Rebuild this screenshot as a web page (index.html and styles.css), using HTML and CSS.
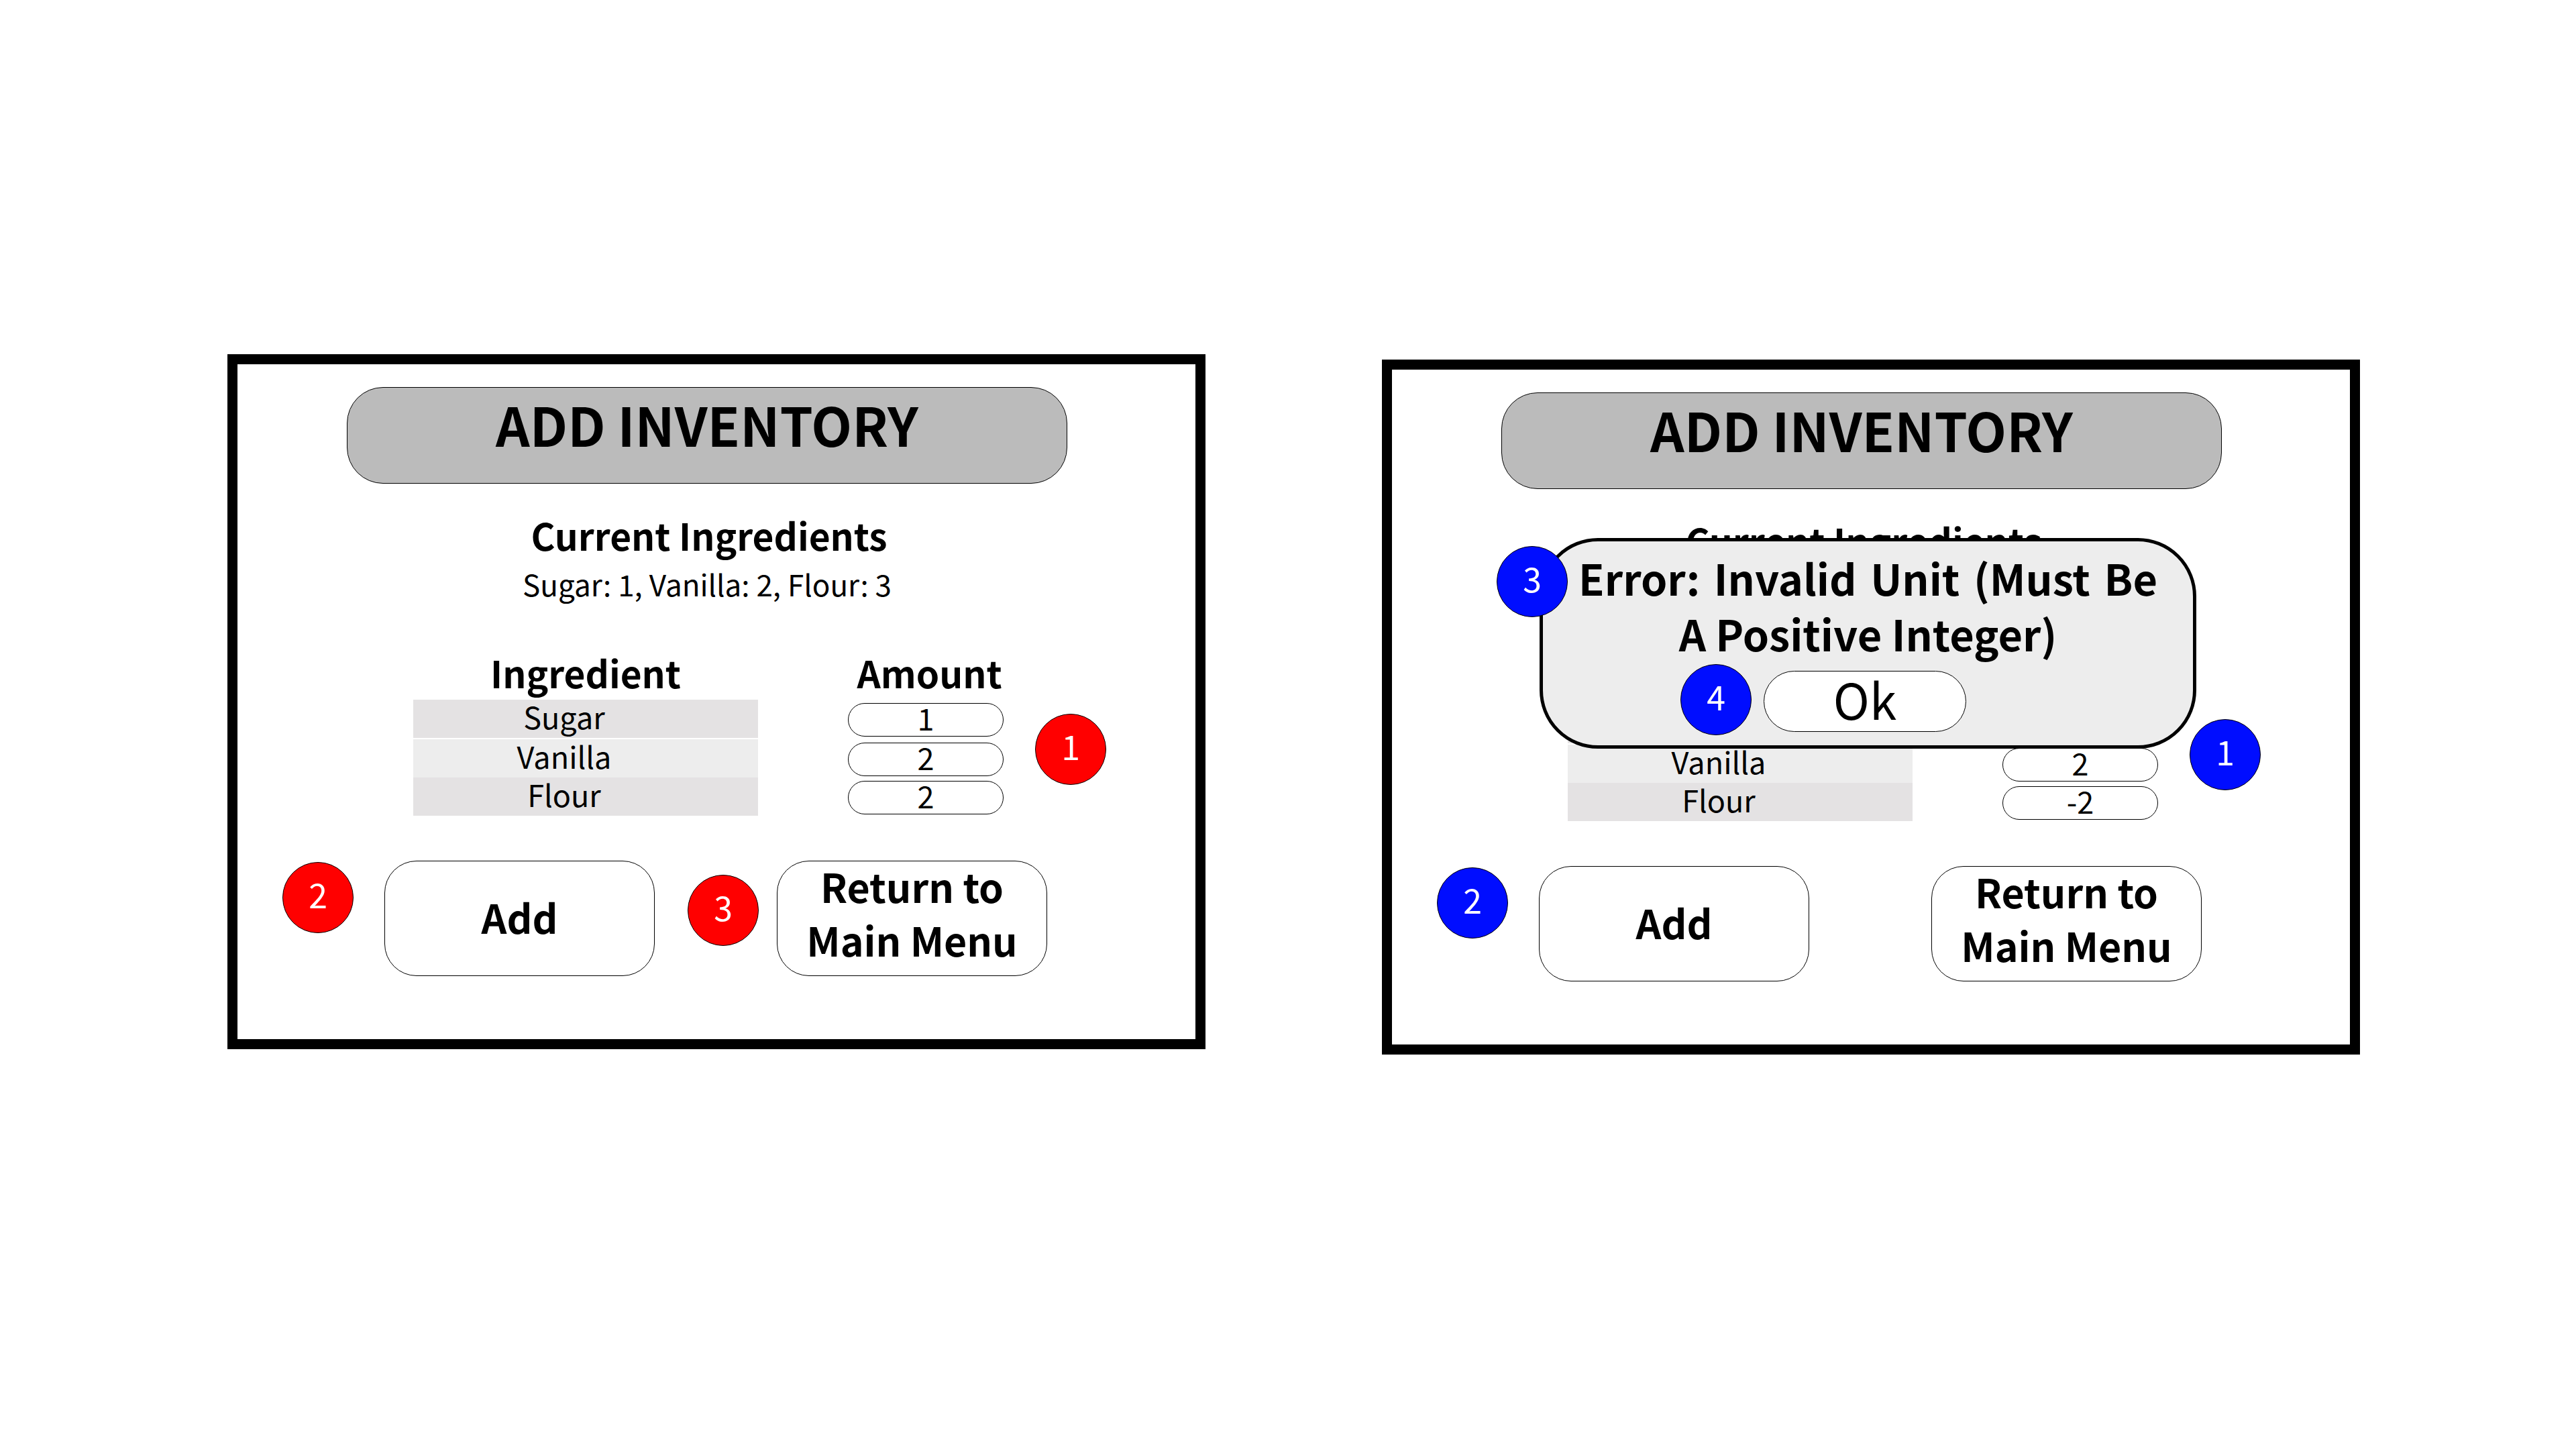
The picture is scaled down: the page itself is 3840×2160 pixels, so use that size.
FILE: index.html
```html
<!DOCTYPE html>
<html lang="en">
<head>
<meta charset="utf-8">
<title>Add Inventory</title>
<link rel="stylesheet" href="styles.css">
</head>
<body>
<main class="board">
  <section class="screen">
    <h1 class="title">ADD INVENTORY</h1>
    <h2 class="heading">Current Ingredients</h2>
    <p class="summary">Sugar: 1, Vanilla: 2, Flour: 3</p>
    <form class="form">
      <div class="stock">
        <table class="table">
          <thead>
            <tr><th class="name-col" scope="col">Ingredient</th><th class="amount-col" scope="col">Amount</th></tr>
          </thead>
          <tbody>
            <tr class="first-row"><td class="name"><label for="a-sugar">Sugar</label></td><td class="amount"><input class="field" id="a-sugar" type="text" inputmode="numeric" value="1"></td></tr>
            <tr><td class="name name-light"><label for="a-vanilla">Vanilla</label></td><td class="amount"><input class="field" id="a-vanilla" type="text" inputmode="numeric" value="2"></td></tr>
            <tr><td class="name"><label for="a-flour">Flour</label></td><td class="amount"><input class="field" id="a-flour" type="text" inputmode="numeric" value="2"></td></tr>
          </tbody>
        </table>
      </div>
      <div class="actions">
        <button class="action" type="button">Add</button>
        <button class="action action-tall" type="button">Return to<br>Main Menu</button>
      </div>
    </form>
    <span class="badge badge-amount">1</span>
    <span class="badge badge-add">2</span>
    <span class="badge badge-return">3</span>
  </section>

  <section class="screen screen-error">
    <h1 class="title">ADD INVENTORY</h1>
    <h2 class="heading">Current Ingredients</h2>
    <p class="summary">Sugar: 1, Vanilla: 2, Flour: 3</p>
    <form class="form">
      <div class="stock">
        <table class="table">
          <thead>
            <tr><th class="name-col" scope="col">Ingredient</th><th class="amount-col" scope="col">Amount</th></tr>
          </thead>
          <tbody>
            <tr class="first-row"><td class="name"><label for="b-sugar">Sugar</label></td><td class="amount"><input class="field" id="b-sugar" type="text" inputmode="numeric" value="1"></td></tr>
            <tr><td class="name name-light"><label for="b-vanilla">Vanilla</label></td><td class="amount"><input class="field" id="b-vanilla" type="text" inputmode="numeric" value="2"></td></tr>
            <tr><td class="name"><label for="b-flour">Flour</label></td><td class="amount"><input class="field" id="b-flour" type="text" inputmode="numeric" value="-2"></td></tr>
          </tbody>
        </table>
      </div>
      <div class="actions">
        <button class="action" type="button">Add</button>
        <button class="action action-tall" type="button">Return to<br>Main Menu</button>
      </div>
    </form>
    <div class="dialog" role="alertdialog" aria-labelledby="error-text">
      <p class="message" id="error-text">Error: Invalid Unit (Must Be A Positive Integer)</p>
      <button class="ok" type="button">Ok</button>
    </div>
    <span class="badge badge-amount">1</span>
    <span class="badge badge-add">2</span>
    <span class="badge badge-error">3</span>
    <span class="badge badge-ok">4</span>
  </section>
</main>
</body>
</html>
```
FILE: styles.css
```css
* {
  box-sizing: border-box;
}

body {
  margin: 0;
  background: #fff;
  color: #000;
  font-family: "Noto Sans CJK SC", "Open Sans", sans-serif;
  font-size: 45px;
}

h1,
h2,
p {
  margin: 0;
}

button,
input {
  font: inherit;
  color: inherit;
}

.board {
  display: grid;
  grid-template-columns: 1fr 1fr;
  align-items: start;
  gap: 263px;
  padding: 528px 322px 80px 339px;
}

.screen {
  --badge: #f00;
  position: relative;
  border: 15px solid #000;
  padding: 34px 0 94px;
}

.screen-error {
  --badge: #000dff;
  margin-top: 8px;
}

.title {
  margin: 0 191px 0 163px;
  padding-bottom: 34px;
  border: 1px solid #000;
  border-radius: 54px;
  background: #bbb;
  font-size: 79px;
  line-height: 108px;
  text-align: center;
}

.heading {
  margin: 46px 188px 0 166px;
  font-size: 55px;
  line-height: 60px;
  text-align: center;
}

.summary {
  margin: 13px 191px 0 163px;
  font-size: 44px;
  line-height: 60px;
  text-align: center;
}

/* Ingredient table */
.stock {
  padding: 72px 286px 0 262px;
}

.table {
  width: 100%;
  table-layout: fixed;
  border-collapse: separate;
  border-spacing: 0;
}

th {
  height: 71px;
  padding: 0;
  font-size: 55px;
  line-height: 60px;
  vertical-align: top;
}

.name-col {
  width: 514px;
}

.amount-col {
  padding-left: 145px;
}

.name {
  height: 57px;
  padding: 0 64px 0 0;
  background: #e4e2e3;
  line-height: 50px;
  text-align: center;
  vertical-align: top;
}

.name-light {
  background: #ededed;
}

.first-row .name {
  height: 59px;
  border-bottom: 2px solid #fff;
}

.amount {
  padding: 5px 0 0 134px;
  line-height: 50px;
  vertical-align: top;
}

.field {
  display: block;
  width: 100%;
  height: 50px;
  padding: 0 0 6px;
  border: 1px solid #000;
  border-radius: 25px;
  background: #fff;
  text-align: center;
}

/* Buttons under the table */
.actions {
  display: grid;
  grid-template-columns: 1fr 1fr;
  gap: 182px;
  margin: 67px 221px 0 219px;
}

.action {
  display: flex;
  align-items: center;
  justify-content: center;
  height: 172px;
  padding: 0 0 4px;
  border: 1px solid #000;
  border-radius: 48px;
  background: #fff;
  font-size: 59px;
  font-weight: 700;
  line-height: 80px;
}

.action-tall {
  padding-bottom: 16px;
}

/* Error message over the form */
.dialog {
  position: absolute;
  top: 251px;
  left: 220px;
  right: 229px;
  padding: 12px 53px 20px;
  border: 5px solid #000;
  border-radius: 87px;
  background: #ededed;
}

.message {
  font-size: 63px;
  font-weight: 700;
  line-height: 83px;
  text-align: justify;
  text-align-last: center;
}

.ok {
  display: flex;
  align-items: center;
  justify-content: center;
  width: 302px;
  height: 91px;
  margin: 15px 0 0 276px;
  padding: 0 0 9px;
  border: 1px solid #000;
  border-radius: 46px;
  background: #fff;
  font-size: 73px;
  line-height: 80px;
}

/* Numbered callouts */
.badge {
  position: absolute;
  width: 106px;
  height: 106px;
  border: 1px solid #000;
  border-radius: 50%;
  background: var(--badge);
  color: #fff;
  font-size: 50px;
  line-height: 92px;
  text-align: center;
}

.badge-amount {
  top: 521px;
  left: 1189px;
}

.badge-add {
  top: 742px;
  left: 67px;
}

.badge-return {
  top: 761px;
  left: 671px;
}

.badge-error {
  top: 263px;
  left: 156px;
}

.badge-ok {
  top: 439px;
  left: 430px;
}
```
